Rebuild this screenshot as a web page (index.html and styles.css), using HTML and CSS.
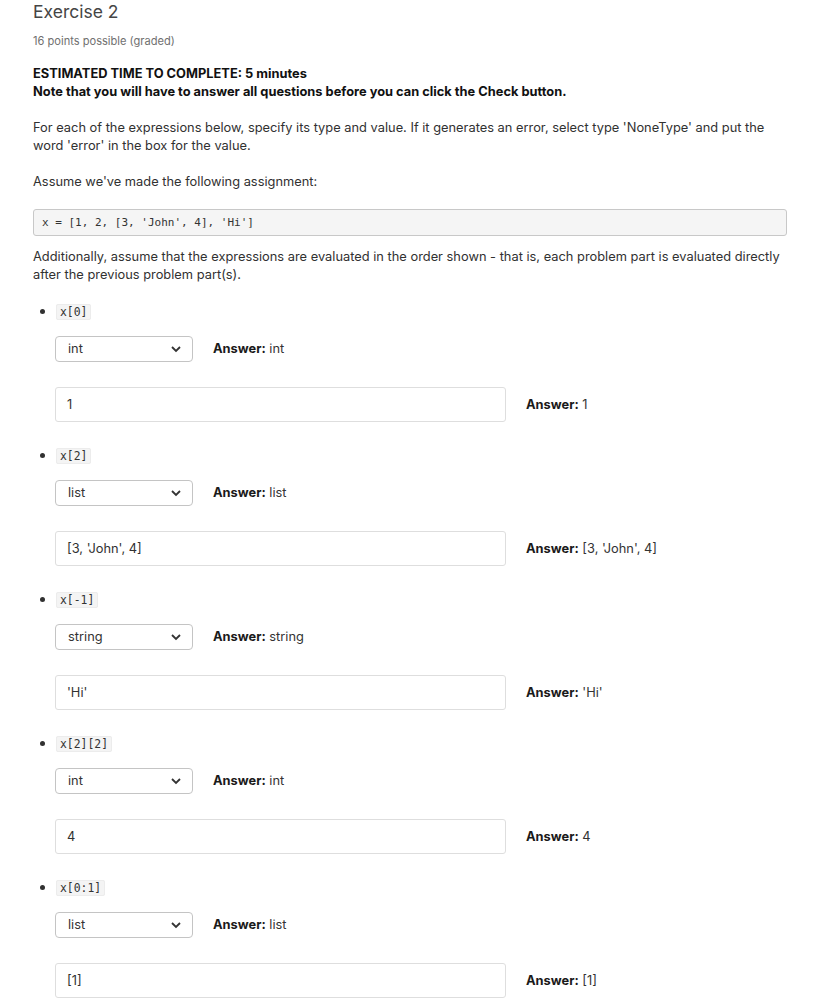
FILE: index.html
```html
<!DOCTYPE html>
<html>
<head>
<meta charset="utf-8">
<link rel="stylesheet" href="styles.css">
</head>
<body>
<div class="page">
  <h2 class="title">Exercise 2</h2>
  <div class="points">16 points possible (graded)</div>
  <p class="bold">ESTIMATED TIME TO COMPLETE: 5 minutes<br>Note that you will have to answer all questions before you can click the Check button.</p>
  <p>For each of the expressions below, specify its type and value. If it generates an error, select type 'NoneType' and put the word 'error' in the box for the value.</p>
  <p>Assume we've made the following assignment:</p>
  <pre class="codebox">x = [1, 2, [3, 'John', 4], 'Hi']</pre>
  <p class="tight">Additionally, assume that the expressions are evaluated in the order shown - that is, each problem part is evaluated directly after the previous problem part(s).</p>
  <ul class="parts">
    <li>
      <code>x[0]</code>
      <div class="row sel-row"><div class="select"><span>int</span><svg width="12" height="8" viewBox="0 0 12 8"><path d="M2 2l4 4 4-4" fill="none" stroke="#333" stroke-width="1.8"/></svg></div><div class="answer"><b>Answer:</b> int</div></div>
      <div class="row in-row"><div class="input">1</div><div class="answer"><b>Answer:</b> 1</div></div>
    </li>
    <li>
      <code>x[2]</code>
      <div class="row sel-row"><div class="select"><span>list</span><svg width="12" height="8" viewBox="0 0 12 8"><path d="M2 2l4 4 4-4" fill="none" stroke="#333" stroke-width="1.8"/></svg></div><div class="answer"><b>Answer:</b> list</div></div>
      <div class="row in-row"><div class="input">[3, 'John', 4]</div><div class="answer"><b>Answer:</b> [3, 'John', 4]</div></div>
    </li>
    <li>
      <code>x[-1]</code>
      <div class="row sel-row"><div class="select"><span>string</span><svg width="12" height="8" viewBox="0 0 12 8"><path d="M2 2l4 4 4-4" fill="none" stroke="#333" stroke-width="1.8"/></svg></div><div class="answer"><b>Answer:</b> string</div></div>
      <div class="row in-row"><div class="input">'Hi'</div><div class="answer"><b>Answer:</b> 'Hi'</div></div>
    </li>
    <li>
      <code>x[2][2]</code>
      <div class="row sel-row"><div class="select"><span>int</span><svg width="12" height="8" viewBox="0 0 12 8"><path d="M2 2l4 4 4-4" fill="none" stroke="#333" stroke-width="1.8"/></svg></div><div class="answer"><b>Answer:</b> int</div></div>
      <div class="row in-row"><div class="input">4</div><div class="answer"><b>Answer:</b> 4</div></div>
    </li>
    <li>
      <code>x[0:1]</code>
      <div class="row sel-row"><div class="select"><span>list</span><svg width="12" height="8" viewBox="0 0 12 8"><path d="M2 2l4 4 4-4" fill="none" stroke="#333" stroke-width="1.8"/></svg></div><div class="answer"><b>Answer:</b> list</div></div>
      <div class="row in-row"><div class="input">[1]</div><div class="answer"><b>Answer:</b> [1]</div></div>
    </li>
  </ul>
</div>
</body>
</html>
```

FILE: styles.css
```css
html, body {
  margin: 0;
  padding: 0;
  background: #fff;
}
body {
  font-family: Inter, "Noto Sans", sans-serif;
  font-size: 12.85px;
  line-height: 18px;
  color: #313131;
}
.page {
  padding: 0 37px 0 33px;
}
.title {
  margin: 0;
  font-size: 17.5px;
  font-weight: 400;
  line-height: 24px;
  color: #454545;
}
.points {
  margin-top: 8px;
  font-size: 11.1px;
  color: #707070;
  line-height: 18px;
}
p {
  margin: 18px 0 0 0;
}
p.bold {
  margin-top: 15px;
  font-weight: 700;
  color: #111;
}
.codebox {
  margin: 18px 0 0 0;
  height: 25px;
  box-sizing: content-box;
  border: 1px solid #c8c8c8;
  border-radius: 3px;
  background: #f5f5f5;
  padding: 0 0 0 8px;
  font-family: "DejaVu Sans Mono", monospace;
  font-size: 11px;
  line-height: 25px;
  color: #333;
}
p.tight {
  margin-top: 12px;
}
.parts {
  margin: 18px 0 0 0;
  padding: 0 0 0 23px;
}
.parts li {
  margin: 0 0 24px 0;
  line-height: 18px;
}
.parts li::marker {
  font-size: 14px;
}
code {
  font-family: "DejaVu Sans Mono", monospace;
  font-size: 11.4px;
  line-height: 12px;
  background: #f4f4f4;
  border: 1px solid #ececec;
  border-radius: 2px;
  padding: 0 3px;
  color: #333;
}
.row {
  display: flex;
  align-items: center;
}
.sel-row {
  margin-top: 15px;
  height: 26px;
}
.in-row {
  margin-top: 25px;
  height: 35px;
}
.select {
  height: 24px;
  border: 1px solid #c4c4c4;
  border-radius: 4px;
  display: flex;
  align-items: center;
  justify-content: space-between;
  padding: 0 10px 0 12px;
  box-sizing: content-box;
  width: 114px;
  margin-left: -1px;
}
.select span {
  color: #333;
}
.answer {
  margin-left: 20px;
  color: #333;
}
.answer b {
  color: #1a1a1a;
}
.input {
  width: 438px;
  height: 33px;
  border: 1px solid #dedede;
  border-radius: 3px;
  padding-left: 11px;
  box-sizing: content-box;
  display: flex;
  align-items: center;
  margin-left: -1px;
}
```
